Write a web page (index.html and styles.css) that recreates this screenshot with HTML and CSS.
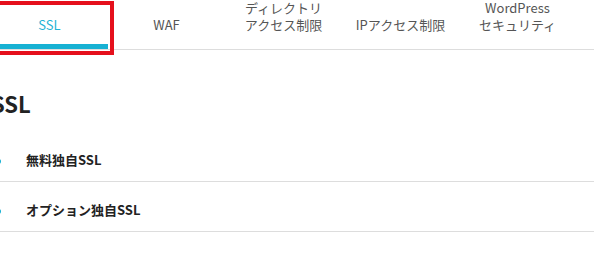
FILE: index.html
```html
<!DOCTYPE html>
<html lang="ja">
<head>
    <meta charset="UTF-8">
    <meta name="viewport" content="width=device-width, initial-scale=1.0">
    <title>セキュリティ設定</title>
    <link rel="stylesheet" href="styles.css">
</head>
<body>
    <div class="page">
        <!-- タブ -->
        <div class="tabs">
            <div class="tab is-active">SSL</div>
            <div class="tab">WAF</div>
            <div class="tab">ディレクトリ<br>アクセス制限</div>
            <div class="tab">IPアクセス制限</div>
            <div class="tab">WordPress<br>セキュリティ</div>
        </div>
        <div class="highlight"></div>

        <h2 class="section-title">SSL</h2>

        <ul class="menu-list">
            <li class="menu-item">無料独自SSL</li>
            <li class="menu-item">オプション独自SSL</li>
        </ul>
    </div>
</body>
</html>
```

FILE: styles.css
```css
body {
    margin: 0;
    font-family: "Noto Sans CJK JP", "Noto Sans", sans-serif;
    color: #222;
    background-color: #fff;
    overflow: hidden;
}
.page {
    position: relative;
    margin-left: -9px;
}
.tabs {
    display: flex;
    border-bottom: 1px solid #ddd;
}
.tab {
    position: relative;
    flex: 0 0 117px;
    height: 49px;
    box-sizing: border-box;
    padding-bottom: 16px;
    display: flex;
    align-items: flex-end;
    justify-content: center;
    text-align: center;
    font-size: 13px;
    line-height: 17px;
    color: #555;
}
.tab.is-active {
    color: #1fb3d5;
}
.tab.is-active::after {
    content: "";
    position: absolute;
    left: 0;
    right: 0;
    bottom: 0;
    height: 5px;
    background-color: #17b1d3;
}

/* 赤枠の強調 */
.highlight {
    position: absolute;
    left: -20px;
    top: 1px;
    width: 143px;
    height: 54px;
    box-sizing: border-box;
    border: 4px solid #e5101c;
}
.section-title {
    margin: 37px 0 0;
    font-size: 22px;
    line-height: 32px;
    font-weight: bold;
}
.menu-list {
    list-style: none;
    margin: 13px 0 0;
    padding: 0;
}
.menu-item {
    position: relative;
    padding: 18px 0 11px 35px;
    font-size: 13px;
    line-height: 20px;
    font-weight: bold;
    border-bottom: 1px solid #ddd;
}
.menu-item::before {
    content: "";
    position: absolute;
    left: 5px;
    top: 27px;
    width: 5px;
    height: 5px;
    border-radius: 50%;
    background-color: #17b1d3;
}
```
